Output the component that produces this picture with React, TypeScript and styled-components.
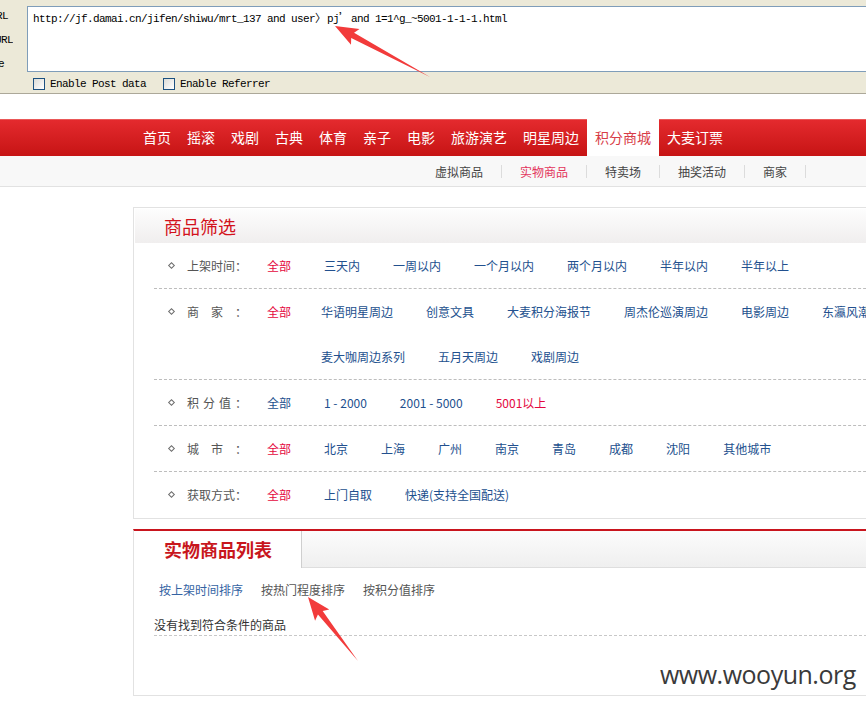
import React from 'react';
import styled, { createGlobalStyle } from 'styled-components';

const Global = createGlobalStyle`
  html, body { margin: 0; padding: 0; overflow: hidden; background: #fff; }
  body { font-family: "Noto Sans CJK SC", "Liberation Sans", sans-serif; font-size: 12px; color: #333; }
  * { box-sizing: border-box; }
`;

const Page = styled.div`
  position: relative;
  width: 866px;
  height: 705px;
  overflow: hidden;
`;

/* ---------- browser add-on toolbar ---------- */
const Toolbar = styled.div`
  height: 94px;
  background: #ece9d8;
  border-bottom: 1px solid #aca899;
  display: flex;
  font-family: "Liberation Mono", "Noto Sans CJK SC", monospace;
  font-size: 11px;
  letter-spacing: -0.6px;
  color: #000;
`;

const LabelCol = styled.div`
  flex: none;
  width: 13px;
  overflow: hidden;
  margin-right: 14px;
  padding-top: 9px;
  display: flex;
  flex-direction: column;
  align-items: flex-end;
  gap: 10px;
`;

const SideLabel = styled.span<{ $pad: number }>`
  white-space: nowrap;
  line-height: 14px;
  padding-right: ${(p) => p.$pad}px;
`;

const ToolMain = styled.div`
  flex: none;
  display: flex;
  flex-direction: column;
  padding-top: 6px;
`;

const UrlField = styled.div`
  width: 900px;
  height: 66px;
  background: #fff;
  border: 1px solid #7f9db9;
  padding: 3px 5px;
  line-height: 14px;
  white-space: pre;
`;

const Wide = styled.span`
  display: inline-block;
  width: 12px;
  font-family: "Noto Sans CJK SC", sans-serif;
  letter-spacing: 0;
`;

const CheckRow = styled.div`
  display: flex;
  align-items: center;
  margin-top: 6px;
  padding-left: 6px;
  height: 12px;
`;

const CheckBox = styled.span`
  width: 12px;
  height: 12px;
  border: 1px solid #1c5180;
  background: linear-gradient(135deg, #dcdcd7, #fff);
  margin-right: 5px;
`;

const CheckLabel = styled.span`
  margin-right: 17px;
  line-height: 12px;
`;

/* ---------- site navigation ---------- */
const Gap = styled.div`
  height: 25px;
`;

const NavBar = styled.nav`
  height: 37px;
  display: flex;
  padding-left: 135px;
  background: linear-gradient(#ea5858 0, #ea5858 1px, #e42a2e 1px, #c61414 100%);
`;

const NavItem = styled.span<{ $active?: boolean }>`
  padding: 0 8px;
  line-height: 37px;
  font-size: 14px;
  white-space: nowrap;
  color: ${(p) => (p.$active ? '#d83c47' : '#fff')};
  background: ${(p) => (p.$active ? '#fff' : 'transparent')};
`;

const SubNav = styled.div`
  height: 31px;
  background: #f8f8f8;
  border-bottom: 1px solid #e2e2e2;
  display: flex;
  align-items: center;
  padding-left: 417px;
`;

const SubItem = styled.span<{ $active?: boolean }>`
  padding: 0 18px;
  line-height: 13px;
  border-right: 1px solid #dcdcdc;
  white-space: nowrap;
  color: ${(p) => (p.$active ? '#e3355c' : '#444')};
`;

/* ---------- filter panel ---------- */
const Panel = styled.section`
  margin: 20px 0 0 133px;
  width: 830px;
  border: 1px solid #e2e2e2;
  padding: 1px;
`;

const PanelHead = styled.div`
  height: 34px;
  line-height: 34px;
  padding-left: 29px;
  font-size: 18px;
  color: #d3121c;
  background: linear-gradient(#fdfdfd, #f0eeee);
`;

const Rows = styled.div`
  margin: 0 20px 0 19px;
`;

const Row = styled.div`
  display: flex;
  align-items: flex-start;
  padding-left: 15px;
  line-height: 45px;
  border-bottom: 1px dashed #bdbdbd;
  &:last-child { border-bottom: none; }
`;

const Bullet = styled.span`
  width: 5px;
  height: 5px;
  margin: 20px 13px 0 0;
  border: 1px solid #6d6d6d;
  transform: rotate(45deg);
  flex: none;
`;

const Label = styled.span`
  width: 60px;
  flex: none;
  color: #555;
  text-align: justify;
  text-align-last: justify;
  margin-right: 20px;
`;

const Option = styled.span<{ $on?: boolean }>`
  white-space: nowrap;
  color: ${(p) => (p.$on ? '#e4083e' : '#22508e')};
`;

const AllOption = styled(Option)<{ $gap: number }>`
  flex: none;
  margin-right: ${(p) => p.$gap}px;
`;

const Options = styled.div`
  flex: 1;
  display: flex;
  flex-wrap: wrap;
  column-gap: 33px;
`;

/* ---------- product list ---------- */
const ListBox = styled.section`
  margin: 10px 0 0 133px;
  width: 830px;
  border: 1px solid #e2e2e2;
  border-top: 2px solid #c9151e;
`;

const ListHead = styled.div`
  display: flex;
  height: 37px;
`;

const Tab = styled.div`
  width: 168px;
  background: #fff;
  border-right: 1px solid #cfcfcf;
  padding-left: 30px;
  font-size: 18px;
  font-weight: bold;
  line-height: 37px;
  color: #c8161d;
`;

const HeadRest = styled.div`
  flex: 1;
  background: linear-gradient(#fcfcfc, #efefef);
  border-bottom: 1px solid #dedede;
`;

const ListBody = styled.div`
  height: 127px;
`;

const SortBar = styled.div`
  display: flex;
  gap: 18px;
  padding: 14px 0 0 25px;
  line-height: 16px;
`;

const SortLink = styled.span<{ $on?: boolean }>`
  color: ${(p) => (p.$on ? '#3463a3' : '#555')};
`;

const Empty = styled.div`
  margin: 19px 20px 0 20px;
  line-height: 16px;
  padding-bottom: 2px;
  border-bottom: 1px dashed #c8c8c8;
  color: #333;
`;

/* ---------- overlays ---------- */
const Watermark = styled.div`
  position: absolute;
  left: 660px;
  top: 657px;
  font-family: "Open Sans", sans-serif;
  font-size: 25px;
  letter-spacing: -0.5px;
  color: #3a3a3a;
`;

const Arrows = styled.svg`
  position: absolute;
  left: 0;
  top: 0;
  pointer-events: none;
`;

function Arrow({ x1, y1, x2, y2 }: { x1: number; y1: number; x2: number; y2: number }) {
  const L = Math.hypot(x2 - x1, y2 - y1);
  const a = (Math.atan2(y2 - y1, x2 - x1) * 180) / Math.PI;
  const pts = `0,0 ${L - 20},-3 ${L - 23},-9 ${L},0 ${L - 23},9 ${L - 20},3`;
  return <polygon points={pts} fill="#f23b3b" transform={`translate(${x1} ${y1}) rotate(${a})`} />;
}

const filters: { label: string; all: boolean; gap: number; items: { t: string; on?: boolean }[] }[] = [
  { label: '上架时间：', all: true, gap: 33, items: ['三天内', '一周以内', '一个月以内', '两个月以内', '半年以内', '半年以上'].map((t) => ({ t })) },
  {
    label: '商家：',
    all: true,
    gap: 30,
    items: ['华语明星周边', '创意文具', '大麦积分海报节', '周杰伦巡演周边', '电影周边', '东瀛风潮周边', '麦大咖周边系列', '五月天周边', '戏剧周边'].map((t) => ({ t })),
  },
  { label: '积分值：', all: false, gap: 33, items: [{ t: '1 - 2000' }, { t: '2001 - 5000' }, { t: '5001以上', on: true }] },
  { label: '城市：', all: true, gap: 33, items: ['北京', '上海', '广州', '南京', '青岛', '成都', '沈阳', '其他城市'].map((t) => ({ t })) },
  { label: '获取方式：', all: true, gap: 33, items: ['上门自取', '快递(支持全国配送)'].map((t) => ({ t })) },
];

export default function App() {
  return (
    <Page>
      <Global />
      <Toolbar>
        <LabelCol>
          <SideLabel $pad={5}>Load URL</SideLabel>
          <SideLabel $pad={0}>Split URL</SideLabel>
          <SideLabel $pad={9}>Execute</SideLabel>
        </LabelCol>
        <ToolMain>
          <UrlField>
            http://jf.damai.cn/jifen/shiwu/mrt_137 and user<Wide>〉</Wide>pj<Wide>’</Wide>and 1=1^g_~5001-1-1-1.html
          </UrlField>
          <CheckRow>
            <CheckBox />
            <CheckLabel>Enable Post data</CheckLabel>
            <CheckBox />
            <CheckLabel>Enable Referrer</CheckLabel>
          </CheckRow>
        </ToolMain>
      </Toolbar>
      <Gap />
      <NavBar>
        {['首页', '摇滚', '戏剧', '古典', '体育', '亲子', '电影', '旅游演艺', '明星周边', '积分商城', '大麦订票'].map((n) => (
          <NavItem key={n} $active={n === '积分商城'}>
            {n}
          </NavItem>
        ))}
      </NavBar>
      <SubNav>
        {['虚拟商品', '实物商品', '特卖场', '抽奖活动', '商家'].map((n) => (
          <SubItem key={n} $active={n === '实物商品'}>
            {n}
          </SubItem>
        ))}
      </SubNav>
      <Panel>
        <PanelHead>商品筛选</PanelHead>
        <Rows>
          {filters.map((f) => (
            <Row key={f.label}>
              <Bullet />
              <Label>{f.label}</Label>
              <AllOption $on={f.all} $gap={f.gap}>
                全部
              </AllOption>
              <Options>
                {f.items.map((i) => (
                  <Option key={i.t} $on={i.on}>
                    {i.t}
                  </Option>
                ))}
              </Options>
            </Row>
          ))}
        </Rows>
      </Panel>
      <ListBox>
        <ListHead>
          <Tab>实物商品列表</Tab>
          <HeadRest />
        </ListHead>
        <ListBody>
          <SortBar>
            <SortLink $on>按上架时间排序</SortLink>
            <SortLink>按热门程度排序</SortLink>
            <SortLink>按积分值排序</SortLink>
          </SortBar>
          <Empty>没有找到符合条件的商品</Empty>
        </ListBody>
      </ListBox>
      <Watermark>www.wooyun.org</Watermark>
      <Arrows width="866" height="705" viewBox="0 0 866 705">
        <Arrow x1={430} y1={77} x2={335} y2={26} />
        <Arrow x1={358} y1={661} x2={308} y2={597} />
      </Arrows>
    </Page>
  );
}
